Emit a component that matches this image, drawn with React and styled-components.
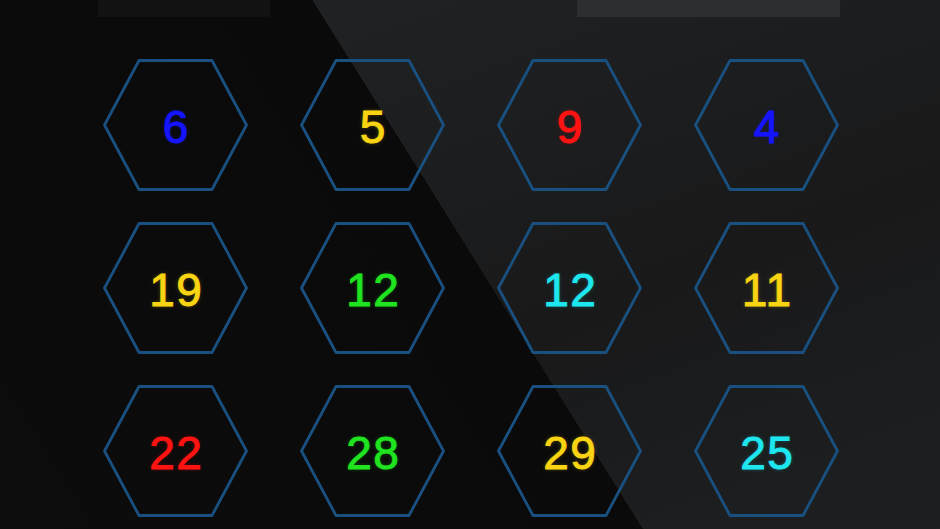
import React from 'react';
import styled, { createGlobalStyle } from 'styled-components';

const GlobalStyle = createGlobalStyle`
    html, body {
        margin: 0;
        padding: 0;
        background: #0a0a0a;
        overflow: hidden;
    }
`

const Screen = styled.main`
    position: relative;
    width: 100%;
    height: 100vh;
    box-sizing: border-box;
    font-family: "Liberation Sans", Arial, sans-serif;
    background:
        linear-gradient(58deg, #0c0c0c 0%, #0a0a0a 50.6%, rgba(10,10,10,0) 50.6%),
        linear-gradient(160deg, #212427 0%, #1b1c1d 45%, #19191a 60%, #1d2022 100%);
    overflow: hidden;
`

const TopBar = styled.header`
    display: flex;
    padding-left: 98px;
    gap: 307px;
    height: 17px;
`

const Tab = styled.div`
    width: ${props => props.width}px;
    height: 100%;
    background-color: ${props => props.bg};
`

const Board = styled.section`
    display: grid;
    grid-template-columns: repeat(4, 145px);
    grid-auto-rows: 132px;
    column-gap: 52px;
    row-gap: 31px;
    padding: 42px 0 0 103px;
`

const Cell = styled.div`
    position: relative;
    display: flex;
    align-items: center;
    justify-content: center;

    svg{
        position: absolute;
        inset: 0;
        width: 100%;
        height: 100%;
        overflow: visible;
        filter: blur(0.4px);
    }
`

const Number = styled.span`
    position: relative;
    font-size: 46px;
    font-weight: 400;
    letter-spacing: 1.5px;
    color: ${props => props.color};
    -webkit-text-stroke: 0.9px ${props => props.color};
    text-shadow: 0 0 4px ${props => props.color}55;
    margin: 3px 0 0 1.5px;
`

const COLORS = {
    blue: '#1414ff',
    yellow: '#f8d412',
    red: '#ff1212',
    green: '#1fe41f',
    cyan: '#1ee6ee'
}

const tiles = [
    {value: 6, color: 'blue'},
    {value: 5, color: 'yellow'},
    {value: 9, color: 'red'},
    {value: 4, color: 'blue'},
    {value: 19, color: 'yellow'},
    {value: 12, color: 'green'},
    {value: 12, color: 'cyan'},
    {value: 11, color: 'yellow'},
    {value: 22, color: 'red'},
    {value: 28, color: 'green'},
    {value: 29, color: 'yellow'},
    {value: 25, color: 'cyan'}
]

const Hexagon = () => (
    <svg viewBox="0 0 145 132" preserveAspectRatio="none">
        <polygon
            points="36,1.5 109,1.5 143.5,66 109,130.5 36,130.5 1.5,66"
            fill="none"
            stroke="#1a5080"
            strokeWidth="2.8"
            strokeLinejoin="round"
        />
    </svg>
)

const Tile = ({value, color}) => {
    return(
        <Cell>
            <Hexagon />
            <Number color={COLORS[color]}>{value}</Number>
        </Cell>
    )
}

const App = () => {
    return(
        <Screen>
            <GlobalStyle />
            <TopBar>
                <Tab width={172} bg="#121212" />
                <Tab width={263} bg="#2c2f31" />
            </TopBar>
            <Board>
                {tiles.map((tile, i) => (
                    <Tile key={i} value={tile.value} color={tile.color} />
                ))}
            </Board>
        </Screen>
    )
}

export default App;
